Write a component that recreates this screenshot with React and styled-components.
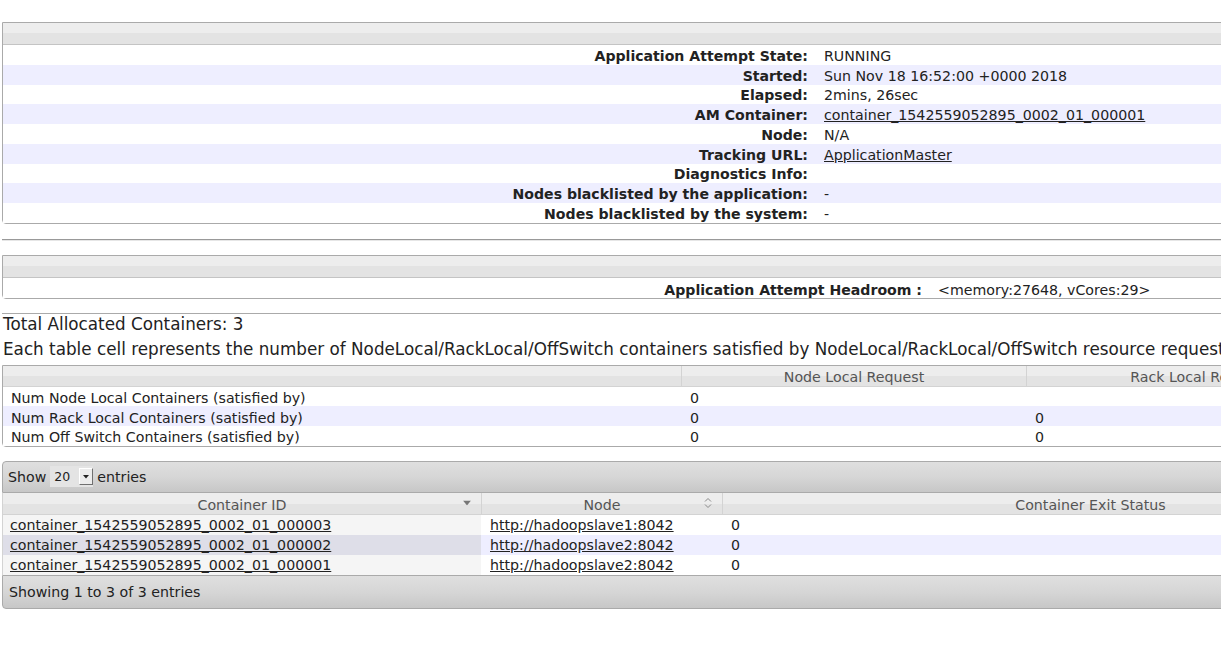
import React from 'react';
import styled, { createGlobalStyle } from 'styled-components';

const GlobalStyle = createGlobalStyle`
  html, body {
    margin: 0;
    padding: 0;
    background: #fff;
    overflow: hidden;
  }
  body {
    font-family: 'DejaVu Sans', Verdana, sans-serif;
    color: #222;
  }
`;

const attemptInfo = [
  { label: 'Application Attempt State:', value: 'RUNNING' },
  { label: 'Started:', value: 'Sun Nov 18 16:52:00 +0000 2018' },
  { label: 'Elapsed:', value: '2mins, 26sec' },
  { label: 'AM Container:', value: 'container_1542559052895_0002_01_000001', link: true },
  { label: 'Node:', value: 'N/A' },
  { label: 'Tracking URL:', value: 'ApplicationMaster', link: true },
  { label: 'Diagnostics Info:', value: '' },
  { label: 'Nodes blacklisted by the application:', value: '-' },
  { label: 'Nodes blacklisted by the system:', value: '-' },
];

const localityRows = [
  { label: 'Num Node Local Containers (satisfied by)', values: ['0', '', ''] },
  { label: 'Num Rack Local Containers (satisfied by)', values: ['0', '0', ''] },
  { label: 'Num Off Switch Containers (satisfied by)', values: ['0', '0', ''] },
];

const containers = [
  { id: 'container_1542559052895_0002_01_000003', node: 'http://hadoopslave1:8042', status: '0' },
  { id: 'container_1542559052895_0002_01_000002', node: 'http://hadoopslave2:8042', status: '0' },
  { id: 'container_1542559052895_0002_01_000001', node: 'http://hadoopslave2:8042', status: '0' },
];

const glass = `linear-gradient(#ededed 0%, #ededed 50%, #e3e3e3 50%, #e3e3e3 100%)`;
const toolbarShade = `linear-gradient(#dfdfdf 0%, #d6d6d6 50%, #c7c7c7 100%)`;

const Page = styled.div`
  width: 1700px;
  padding: 22px 0 40px 2px;
  box-sizing: border-box;
  font-size: 14.2px;
`;

const InfoBox = styled.div`
  border: 1px solid #aaa;
  border-radius: 0 0 0 4px;
  background: #fff;
`;

const BoxHeader = styled.div`
  height: 21px;
  background: ${glass};
  border-bottom: 1px solid #c4c4c4;
`;

const InfoRow = styled.div`
  display: grid;
  grid-template-columns: ${(p) => p.$labelWidth}px 1fr;
  height: 19.75px;
  box-sizing: border-box;
  padding-top: ${(p) => p.$lift || 2}px;
  align-items: center;
  background: ${(p) => (p.$alt ? '#eeeeff' : '#fff')};
`;

const InfoLabel = styled.div`
  text-align: right;
  padding-right: 8px;
  font-weight: bold;
  font-size: 14.1px;
  white-space: nowrap;
`;

const InfoValue = styled.div`
  padding-left: 8px;
  white-space: nowrap;
`;

const Link = styled.a`
  color: #222;
  text-decoration: underline;
  cursor: pointer;
`;

const Rule = styled.hr`
  margin: 15px 0 14px;
  border: none;
  border-top: 1px solid #999;
  border-bottom: 1px solid #e6e6e6;
  height: 0;
`;

const Summary = styled.div`
  margin-top: 14px;
  border-top: 1px solid #aaa;
`;

const SummaryLine = styled.div`
  font-size: 16.8px;
  line-height: 20px;
  margin-top: ${(p) => p.$gap || 0}px;
  padding-left: 1px;
  white-space: nowrap;
`;

const LocalityTable = styled.div`
  margin-top: 6px;
  border: 1px solid #aaa;
  border-radius: 0 0 0 4px;
`;

const LocalityHead = styled.div`
  display: grid;
  grid-template-columns: 678px 345px 345px 345px;
  height: 20px;
  background: ${glass};
  border-bottom: 1px solid #d3d3d3;
`;

const HeadCell = styled.div`
  display: flex;
  align-items: center;
  justify-content: center;
  padding-top: ${(p) => p.$drop || 0}px;
  box-sizing: border-box;
  color: #555;
  white-space: nowrap;
  border-left: ${(p) => (p.$first ? 'none' : '1px solid #d3d3d3')};
`;

const LocalityRow = styled.div`
  display: grid;
  grid-template-columns: 678px 345px 345px 345px;
  height: 19.75px;
  box-sizing: border-box;
  padding-top: 3px;
  align-items: center;
  background: ${(p) => (p.$alt ? '#eeeeff' : '#fff')};
`;

const BodyCell = styled.div`
  padding-left: ${(p) => p.$pad || 9}px;
  white-space: nowrap;
`;

const DataTable = styled.div`
  margin-top: 14px;
`;

const Toolbar = styled.div`
  display: flex;
  align-items: center;
  background: ${toolbarShade};
  border: 1px solid #aaa;
  border-radius: ${(p) => (p.$bottom ? '0 0 0 4px' : '4px 0 0 0')};
  height: ${(p) => (p.$bottom ? 32 : 30)}px;
  padding-left: 5px;
  color: #222;
`;

const LengthSelect = styled.div`
  display: inline-flex;
  align-items: center;
  margin: 0 4px 0 4px;
  height: 21px;
  background: #e4e4e4;
  font-size: 12.5px;
`;

const SelectText = styled.span`
  width: 25px;
  padding-left: 4px;
`;

const SelectArrow = styled.span`
  display: flex;
  align-items: center;
  justify-content: center;
  width: 12px;
  height: 15px;
  background: #ececec;
  border: 1px solid;
  border-color: #fff #707070 #707070 #fff;
  box-sizing: content-box;
`;

const GridHead = styled.div`
  display: grid;
  grid-template-columns: 478px 241px 736px;
  height: 21px;
  background: ${glass};
  border-left: 1px solid #d3d3d3;
  border-bottom: 1px solid #d3d3d3;
`;

const SortHead = styled(HeadCell)`
  position: relative;
`;

const SortIcon = styled.span`
  position: absolute;
  right: ${(p) => p.$right}px;
  top: 50%;
  transform: translateY(-50%);
  display: flex;
`;

const GridRow = styled.div`
  display: grid;
  grid-template-columns: 478px 241px 736px;
  height: 20px;
  align-items: stretch;
  border-left: 1px solid #d3d3d3;
  background: ${(p) => (p.$alt ? '#eeeeff' : '#fff')};
`;

const GridCell = styled.div`
  display: flex;
  align-items: center;
  padding-left: ${(p) => p.$pad}px;
  white-space: nowrap;
  background: ${(p) => (p.$sorted ? (p.$alt ? '#dedee8' : '#f5f5f5') : 'transparent')};
`;

const FooterText = styled.span`
  padding-left: 1px;
`;

const TriangleDown = ({ color = '#222', size = 7 }) => (
  <svg width={size} height={size * 0.6} viewBox="0 0 10 6">
    <path d="M0 0 L10 0 L5 6 Z" fill={color} />
  </svg>
);

const CaretUpDown = () => (
  <svg width="8" height="11" viewBox="0 0 8 11">
    <path d="M1 4 L4 1 L7 4" fill="none" stroke="#888" strokeWidth="1" />
    <path d="M1 7 L4 10 L7 7" fill="none" stroke="#888" strokeWidth="1" />
  </svg>
);

const App = () => {
  return (
    <Page>
      <GlobalStyle />

      <InfoBox>
        <BoxHeader />
        {attemptInfo.map((row, i) => (
          <InfoRow key={row.label} $labelWidth={813} $alt={i % 2 === 1}>
            <InfoLabel>{row.label}</InfoLabel>
            <InfoValue>{row.link ? <Link>{row.value}</Link> : row.value}</InfoValue>
          </InfoRow>
        ))}
      </InfoBox>

      <Rule />

      <InfoBox>
        <BoxHeader />
        <InfoRow $labelWidth={927} $lift={4}>
          <InfoLabel>Application Attempt Headroom :</InfoLabel>
          <InfoValue>&lt;memory:27648, vCores:29&gt;</InfoValue>
        </InfoRow>
      </InfoBox>

      <Summary>
        <SummaryLine>Total Allocated Containers: 3</SummaryLine>
        <SummaryLine $gap={5}>
          Each table cell represents the number of NodeLocal/RackLocal/OffSwitch containers satisfied by NodeLocal/RackLocal/OffSwitch resource requests.
        </SummaryLine>
      </Summary>

      <LocalityTable>
        <LocalityHead>
          <HeadCell $first />
          <HeadCell $drop={2}>Node Local Request</HeadCell>
          <HeadCell $drop={2}>Rack Local Request</HeadCell>
          <HeadCell $drop={2}>Off Switch Request</HeadCell>
        </LocalityHead>
        {localityRows.map((row, i) => (
          <LocalityRow key={row.label} $alt={i % 2 === 1}>
            <BodyCell $pad={8}>{row.label}</BodyCell>
            {row.values.map((v, j) => (
              <BodyCell key={j}>{v}</BodyCell>
            ))}
          </LocalityRow>
        ))}
      </LocalityTable>

      <DataTable>
        <Toolbar>
          Show
          <LengthSelect>
            <SelectText>20</SelectText>
            <SelectArrow>
              <TriangleDown size={6} />
            </SelectArrow>
          </LengthSelect>
          entries
        </Toolbar>

        <GridHead>
          <SortHead $first $drop={3}>
            Container ID
            <SortIcon $right={10}>
              <TriangleDown color="#777" size={8} />
            </SortIcon>
          </SortHead>
          <SortHead $drop={3}>
            Node
            <SortIcon $right={10}>
              <CaretUpDown />
            </SortIcon>
          </SortHead>
          <HeadCell $drop={3}>Container Exit Status</HeadCell>
        </GridHead>

        {containers.map((c, i) => (
          <GridRow key={c.id} $alt={i % 2 === 1}>
            <GridCell $pad={7} $sorted $alt={i % 2 === 1}>
              <Link>{c.id}</Link>
            </GridCell>
            <GridCell $pad={9}>
              <Link>{c.node}</Link>
            </GridCell>
            <GridCell $pad={9}>{c.status}</GridCell>
          </GridRow>
        ))}

        <Toolbar $bottom>
          <FooterText>Showing 1 to 3 of 3 entries</FooterText>
        </Toolbar>
      </DataTable>
    </Page>
  );
};

export default App;
